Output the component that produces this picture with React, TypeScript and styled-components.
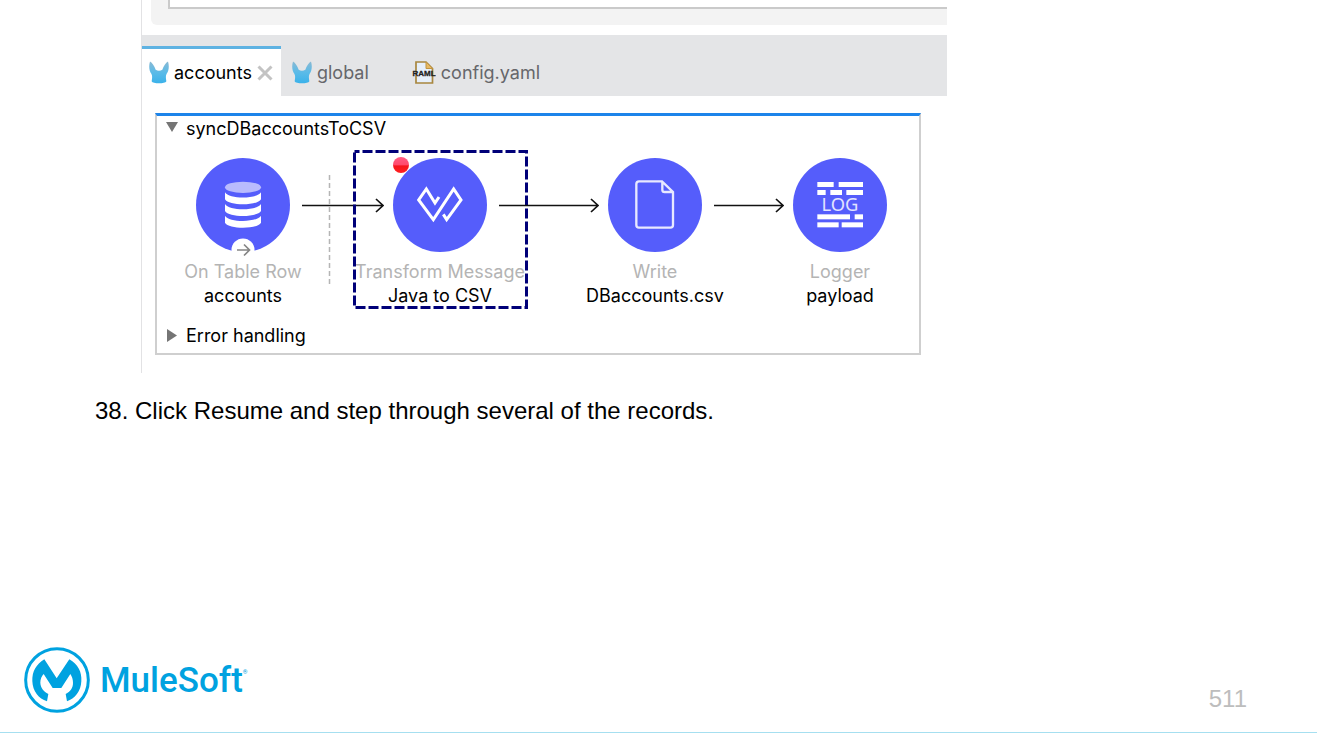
import React from 'react';
import styled, { createGlobalStyle } from 'styled-components';

const GlobalStyle = createGlobalStyle`
  * { box-sizing: border-box; }
  body { margin: 0; background: #fff; color: #000; font-family: "Liberation Sans", Arial, sans-serif; }
  button { border: 0; padding: 0; margin: 0; background: none; font: inherit; color: inherit; }
  svg { display: block; flex: none; }
`;

const Page = styled.div`
  min-height: 100vh;
  display: flex;
  flex-direction: column;
  border-bottom: 1px solid #a6dff0;
`;

const Figure = styled.section`
  margin-left: 141px;
  max-width: 806px;
  border-left: 1px solid #e2e2e4;
  padding-bottom: 18px;
  font-family: Inter, "Liberation Sans", sans-serif;
  font-size: 18px;
  line-height: 24px;
`;

const UpperPanel = styled.div`
  margin: 0 0 10px 9px;
  padding: 0 0 16px 17px;
  background: #f3f3f3;
  border-bottom-left-radius: 6px;
`;

const UpperField = styled.div`
  height: 9px;
  background: #fff;
  border: solid #cacaca;
  border-width: 0 0 2px 2px;
`;

const TabBar = styled.div`
  display: flex;
  height: 61px;
  padding-top: 11px;
  background: #e4e5e7;
`;

const Tab = styled.button<{ $active?: boolean; $wide?: boolean }>`
  display: flex;
  align-items: center;
  gap: 5px;
  padding: 0 ${p => (p.$wide ? 32 : 8)}px 0 ${p => (p.$active ? 7 : 11)}px;
  border-top: 3px solid ${p => (p.$active ? '#5eb2e2' : 'transparent')};
  background: ${p => (p.$active ? '#fff' : 'transparent')};
  color: ${p => (p.$active ? '#000' : '#66676b')};
`;

const Flow = styled.div`
  margin: 17px 26px 0 13px;
  padding: 1px 0 5px;
  border: 2px solid #cfcfcf;
  border-top: 3px solid #1c84ea;
  color: #000;
`;

const SectionToggle = styled.button`
  display: flex;
  align-items: center;
  gap: 8px;
  padding-left: 9px;
`;

const Track = styled.div`
  display: flex;
  align-items: flex-start;
  padding: 17px 0 16px 39px;
`;

const Node = styled.div`
  position: relative;
  width: 94px;
  display: flex;
  flex-direction: column;
  align-items: center;
  white-space: nowrap;
`;

const Disc = styled.svg.attrs({ width: 94, height: 94 })`
  margin-bottom: 8px;
`;

const Kind = styled.span`
  color: #b4b4b4;
`;

const Badge = styled.svg`
  position: absolute;
  top: 80px;
  left: 35px;
`;

const Selection = styled.svg`
  position: absolute;
  top: -8px;
  left: -40px;
`;

const Breakpoint = styled.svg`
  position: absolute;
  top: -2px;
  left: -1px;
`;

const Link = styled.div<{ $length: number }>`
  position: relative;
  width: ${p => p.$length}px;
  margin: 37px 9px 0 12px;
`;

const Boundary = styled.svg`
  position: absolute;
  top: -20px;
  left: 26px;
`;

const Step = styled.p`
  margin: 22px 95px 40px;
  font-size: 24px;
  line-height: 32px;
`;

const Footer = styled.footer`
  margin-top: auto;
  display: flex;
  align-items: center;
  justify-content: space-between;
  padding: 0 70px 19px 24px;
`;

const Brand = styled.a`
  display: flex;
  align-items: center;
  gap: 10px;
  color: #00a2e0;
  text-decoration: none;
`;

const BrandName = styled.span`
  padding-top: 2px;
  font-family: Roboto, "Liberation Sans", sans-serif;
  font-weight: 500;
  font-size: 35px;
  line-height: 40px;
`;

const Registered = styled.sup`
  font-size: 6px;
  line-height: 8px;
  vertical-align: 18px;
`;

const PageNumber = styled.span`
  margin-top: 38px;
  font-size: 24px;
  line-height: 28px;
  color: #bdbdbd;
`;

const PURPLE = '#555dfb';

const MuleIcon = () => (
  <svg width="20" height="23" viewBox="57 177 60 68" aria-hidden="true">
    <defs>
      <linearGradient id="mule" x1="0" y1="0" x2="0" y2="1">
        <stop offset="0" stopColor="#8ab9d3" />
        <stop offset="0.5" stopColor="#5bbbe8" />
        <stop offset="1" stopColor="#3bb2ea" />
      </linearGradient>
    </defs>
    <path
      d="M60 178C67 181 73 192 77 203C83 207 91 207 97 203C101 192 107 181 114 178C118 190 117 206 110 215C107 220 107 226 109 237C106 245 68 245 65 237C67 226 67 220 64 215C57 206 56 190 60 178Z"
      fill="url(#mule)"
    />
  </svg>
);

const RamlIcon = () => (
  <svg width="24" height="24" viewBox="0 0 24 24" aria-hidden="true">
    <path d="M4 1H14L20.500 7.500V22H4Z" fill="#e6effa" stroke="#a8873f" strokeWidth="1.700" />
    <path d="M14 1V7.500H20.500Z" fill="#e7b965" stroke="#c09441" />
    <text x="12" y="15" textAnchor="middle" fontFamily="Liberation Sans" fontWeight="700" fontSize="8" fill="#222" stroke="#222" strokeWidth="0.300">RAML</text>
  </svg>
);

const CloseIcon = () => (
  <svg width="16" height="16" viewBox="0 0 16 16" aria-hidden="true">
    <path d="M1.500 1.500L14.500 14.500M14.500 1.500L1.500 14.500" stroke="#c3c3c3" strokeWidth="3" />
  </svg>
);

const Triangle = ({ open }: { open?: boolean }) => (
  <svg width="12" height="14" viewBox="0 0 12 14" aria-hidden="true">
    <path d={open ? 'M0 0H12L6 10Z' : 'M1 0V13L11 6.500Z'} fill="#757575" />
  </svg>
);

const Arrow = ({ length, children }: { length: number; children?: React.ReactNode }) => (
  <Link $length={length}>
    {children}
    <svg width={length} height="20" viewBox={`0 0 ${length} 20`} aria-hidden="true">
      <path d={`M0 10.500H${length - 1}M${length - 8} 4L${length - 1} 10.500L${length - 8} 17`} fill="none" stroke="#111" strokeWidth="1.700" />
    </svg>
  </Link>
);

const TableRowDisc = () => (
  <Disc viewBox="138 52 282 282" aria-hidden="true">
    <circle cx="279" cy="193" r="141" fill={PURPLE} />
    <ellipse cx="279" cy="140" rx="54" ry="17" fill="#b9bbfd" />
    {[0, 35, 70].map(y => (
      <path key={y} transform={`translate(0 ${y})`} d="M225 155C236 176 322 176 333 155V176C322 196 236 196 225 176Z" fill="#fff" />
    ))}
  </Disc>
);

const TransformDisc = () => (
  <Disc viewBox="160 52 282 282" aria-hidden="true">
    <circle cx="301" cy="193" r="141" fill={PURPLE} />
    <path d="M298 169L286 187L260 145L237 178L281 237L342 145L364 178L321 237L311 221" fill="none" stroke="#fff" strokeWidth="9" />
  </Disc>
);

const WriteDisc = () => (
  <Disc viewBox="146 52 282 282" aria-hidden="true">
    <circle cx="287" cy="193" r="141" fill={PURPLE} />
    <path
      d="M239 122H308L341 154V253Q341 261 333 261H239Q231 261 231 253V130Q231 122 239 122ZM309 122V147Q309 154 316 154H341"
      fill="none" stroke="#e8e9ff" strokeWidth="7"
    />
  </Disc>
);

const LOG_BARS = [
  [231, 244, 49], [295, 244, 73],
  [231, 268, 25], [270, 268, 35], [318, 268, 50],
  [231, 341, 98], [343, 341, 25],
  [231, 365, 64], [304, 365, 64],
];

const LoggerDisc = () => (
  <Disc viewBox="158 172 282 282" aria-hidden="true">
    <circle cx="299" cy="313" r="141" fill={PURPLE} />
    {LOG_BARS.map(([x, y, w]) => (
      <rect key={`${x}-${y}`} x={x} y={y} width={w} height="15" fill="#fff" />
    ))}
    <text x="299" y="331" textAnchor="middle" fontFamily="Noto Sans" fontSize="55" fill="#e2e3ff">LOG</text>
  </Disc>
);

export default function App() {
  return (
    <Page>
      <GlobalStyle />
      <Figure>
        <UpperPanel>
          <UpperField />
        </UpperPanel>
        <TabBar role="tablist">
          <Tab role="tab" aria-selected="true" $active><MuleIcon />accounts<CloseIcon /></Tab>
          <Tab role="tab" aria-selected="false" $wide><MuleIcon />global</Tab>
          <Tab role="tab" aria-selected="false"><RamlIcon />config.yaml</Tab>
        </TabBar>
        <Flow>
          <SectionToggle aria-expanded="true"><Triangle open />syncDBaccountsToCSV</SectionToggle>
          <Track>
            <Node>
              <TableRowDisc />
              <Badge width="24" height="24" viewBox="0 0 24 24" aria-hidden="true">
                <circle cx="12" cy="12" r="11.500" fill="#fff" />
                <path d="M6 12H18M13 6.500L18.500 12L13 17.500" fill="none" stroke="#858585" strokeWidth="1.700" />
              </Badge>
              <Kind>On Table Row</Kind>
              <span>accounts</span>
            </Node>
            <Arrow length={82}>
              <Boundary width="3" height="114" viewBox="0 0 3 114" aria-hidden="true">
                <path d="M1.500 0V112" stroke="#b5b5b5" strokeWidth="1.500" strokeDasharray="5 3" />
              </Boundary>
            </Arrow>
            <Node>
              <TransformDisc />
              <Kind>Transform Message</Kind>
              <span>Java to CSV</span>
              <Selection width="175" height="159" viewBox="0 0 175 159" aria-hidden="true">
                <rect x="1.500" y="1.500" width="172" height="156" fill="none" stroke="#000078" strokeWidth="3" strokeDasharray="10 3" strokeDashoffset="5" />
              </Selection>
              <Breakpoint width="18" height="18" viewBox="0 0 18 18" aria-hidden="true">
                <defs>
                  <linearGradient id="dot" x1="0" y1="0" x2="0" y2="1">
                    <stop offset="0" stopColor="#ff5c84" />
                    <stop offset="0.480" stopColor="#ff4a6c" />
                    <stop offset="0.560" stopColor="#f5141c" />
                    <stop offset="1" stopColor="#ff2020" />
                  </linearGradient>
                </defs>
                <circle cx="9" cy="9" r="8" fill="url(#dot)" />
              </Breakpoint>
            </Node>
            <Arrow length={100} />
            <Node>
              <WriteDisc />
              <Kind>Write</Kind>
              <span>DBaccounts.csv</span>
            </Node>
            <Arrow length={70} />
            <Node>
              <LoggerDisc />
              <Kind>Logger</Kind>
              <span>payload</span>
            </Node>
          </Track>
          <SectionToggle aria-expanded="false"><Triangle />Error handling</SectionToggle>
        </Flow>
      </Figure>
      <Step>38. Click Resume and step through several of the records.</Step>
      <Footer>
        <Brand href="#">
          <svg width="66" height="66" viewBox="42 35 198 198" aria-hidden="true">
            <circle cx="141" cy="134" r="94" fill="none" stroke="#00a2e0" strokeWidth="9" />
            <path
              d="M103 72L140 129L178 72C204 88 216 110 214 138C213 168 194 190 171 198L167 176C181 168 189 158 189 142C189 132 186 124 181 116L154 158H128L101 116C95 122 91 132 91 142C92 158 101 168 115 176L111 198C86 190 68 168 67 138C66 108 78 88 103 72Z"
              fill="#00a2e0"
            />
          </svg>
          <BrandName>MuleSoft<Registered>®</Registered></BrandName>
        </Brand>
        <PageNumber>511</PageNumber>
      </Footer>
    </Page>
  );
}
